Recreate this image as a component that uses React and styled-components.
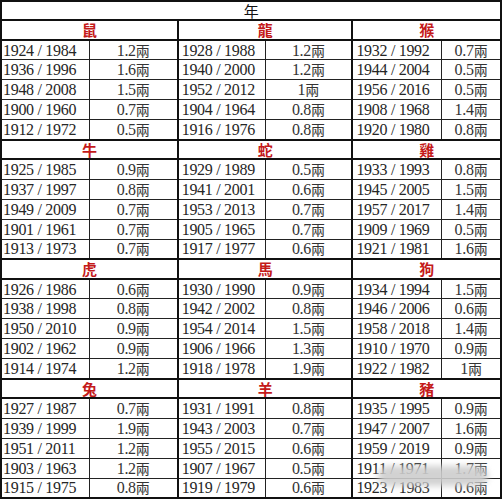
import React from "react";
import styled, { createGlobalStyle } from "styled-components";

const GlobalStyle = createGlobalStyle`
  html, body {
    margin: 0;
    padding: 0;
    background: #ffffff;
  }
`;

const StyledWrap = styled.div`
  position: relative;
  width: 502px;
  height: 500px;
  overflow: hidden;
`;

const StyledTable = styled.table`
  width: 502px;
  height: 499px;
  table-layout: fixed;
  border-collapse: collapse;
  border: 2px solid #111;
  font-family: "Liberation Serif", "Noto Sans CJK TC", serif;
  font-size: 16px;
  letter-spacing: -0.3px;
  color: #262626;
`;

const StyledRow = styled.tr`
  height: 19px;
`;

const StyledHead = styled.th`
  padding: 0;
  font-family: "Noto Sans CJK TC", sans-serif;
  font-size: 15px;
  font-weight: 400;
  color: #111;
  border-bottom: 2px solid #111;
  line-height: 17px;
`;

const StyledSign = styled.td`
  padding: 0;
  text-align: center;
  font-family: "Noto Sans CJK TC", sans-serif;
  font-weight: 700;
  font-size: 15px;
  line-height: 17px;
  color: #c41a1a;
  border-top: 2px solid #111;
  border-bottom: 2px solid #111;
  border-left: ${(props) => (props.$first ? "none" : "2px solid #111")};
`;

const StyledYear = styled.td`
  padding: 0 0 0 ${(props) => (props.$first ? "1px" : "3px")};
  white-space: nowrap;
  line-height: 17px;
  border-bottom: 1px solid #222;
  border-right: 1px solid #222;
  border-left: ${(props) => (props.$first ? "none" : "2px solid #111")};
`;

const StyledValue = styled.td`
  padding: 0;
  text-align: center;
  white-space: nowrap;
  line-height: 17px;
  border-bottom: 1px solid #222;
  color: #333;
`;

const StyledUnit = styled.span`
  font-family: "Noto Sans CJK TC", sans-serif;
  font-size: 14px;
  letter-spacing: 0;
`;

const StyledSmudge = styled.div`
  position: absolute;
  left: 378px;
  top: 466px;
  width: 110px;
  height: 20px;
  border-radius: 10px;
  background: rgba(205, 205, 205, 0.9);
  filter: blur(3px);
`;

const sections = [
  [
    ["鼠", [["1924 / 1984", "1.2"], ["1936 / 1996", "1.6"], ["1948 / 2008", "1.5"], ["1900 / 1960", "0.7"], ["1912 / 1972", "0.5"]]],
    ["龍", [["1928 / 1988", "1.2"], ["1940 / 2000", "1.2"], ["1952 / 2012", "1"], ["1904 / 1964", "0.8"], ["1916 / 1976", "0.8"]]],
    ["猴", [["1932 / 1992", "0.7"], ["1944 / 2004", "0.5"], ["1956 / 2016", "0.5"], ["1908 / 1968", "1.4"], ["1920 / 1980", "0.8"]]],
  ],
  [
    ["牛", [["1925 / 1985", "0.9"], ["1937 / 1997", "0.8"], ["1949 / 2009", "0.7"], ["1901 / 1961", "0.7"], ["1913 / 1973", "0.7"]]],
    ["蛇", [["1929 / 1989", "0.5"], ["1941 / 2001", "0.6"], ["1953 / 2013", "0.7"], ["1905 / 1965", "0.7"], ["1917 / 1977", "0.6"]]],
    ["雞", [["1933 / 1993", "0.8"], ["1945 / 2005", "1.5"], ["1957 / 2017", "1.4"], ["1909 / 1969", "0.5"], ["1921 / 1981", "1.6"]]],
  ],
  [
    ["虎", [["1926 / 1986", "0.6"], ["1938 / 1998", "0.8"], ["1950 / 2010", "0.9"], ["1902 / 1962", "0.9"], ["1914 / 1974", "1.2"]]],
    ["馬", [["1930 / 1990", "0.9"], ["1942 / 2002", "0.8"], ["1954 / 2014", "1.5"], ["1906 / 1966", "1.3"], ["1918 / 1978", "1.9"]]],
    ["狗", [["1934 / 1994", "1.5"], ["1946 / 2006", "0.6"], ["1958 / 2018", "1.4"], ["1910 / 1970", "0.9"], ["1922 / 1982", "1"]]],
  ],
  [
    ["兔", [["1927 / 1987", "0.7"], ["1939 / 1999", "1.9"], ["1951 / 2011", "1.2"], ["1903 / 1963", "1.2"], ["1915 / 1975", "0.8"]]],
    ["羊", [["1931 / 1991", "0.8"], ["1943 / 2003", "0.7"], ["1955 / 2015", "0.6"], ["1907 / 1967", "0.5"], ["1919 / 1979", "0.6"]]],
    ["豬", [["1935 / 1995", "0.9"], ["1947 / 2007", "1.6"], ["1959 / 2019", "0.9"], ["1911 / 1971", "1.7"], ["1923 / 1983", "0.6"]]],
  ],
];

const widths = [88, 88, 87, 87, 89, 59];

const App = () => (
  <StyledWrap>
    <GlobalStyle />
    <StyledTable>
      <colgroup>
        {widths.map((w, i) => (
          <col key={i} style={{ width: w }} />
        ))}
      </colgroup>
      <thead>
        <StyledRow>
          <StyledHead colSpan={6}>年</StyledHead>
        </StyledRow>
      </thead>
      {sections.map((section, s) => (
        <tbody key={s}>
          <StyledRow>
            {section.map(([sign], g) => (
              <StyledSign key={sign} colSpan={2} $first={g === 0}>
                {sign}
              </StyledSign>
            ))}
          </StyledRow>
          {[0, 1, 2, 3, 4].map((r) => (
            <StyledRow key={r}>
              {section.map(([sign, rows], g) => (
                <React.Fragment key={sign}>
                  <StyledYear $first={g === 0}>{rows[r][0]}</StyledYear>
                  <StyledValue>
                    {rows[r][1]}
                    <StyledUnit>兩</StyledUnit>
                  </StyledValue>
                </React.Fragment>
              ))}
            </StyledRow>
          ))}
        </tbody>
      ))}
    </StyledTable>
    <StyledSmudge />
  </StyledWrap>
);

export default App;
